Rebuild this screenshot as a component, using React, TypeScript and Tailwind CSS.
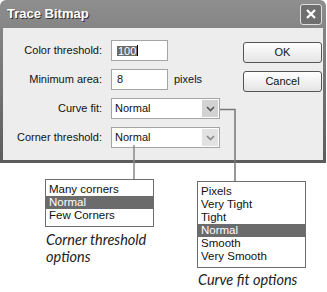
import React from 'react';

const dlgFont = { fontFamily: '"Liberation Sans", Arial, sans-serif' };
const capFont = { fontFamily: 'Lato, "Open Sans", sans-serif' };

const Chevron = ({ light }: { light?: boolean }) => (
    <svg width="9" height="6" viewBox="0 0 9 6">
        <path d="M1 1 L4.5 4.5 L8 1" fill="none" stroke={light ? '#8a8a8a' : '#555'} strokeWidth="1.6" />
    </svg>
);

const Select = ({ value, light }: { value: string; light?: boolean }) => (
    <div className="flex items-center h-[21px] w-[109px] bg-white border border-[#a4a4a4] pl-[3px] pr-[1px]">
        <span className="flex-1 text-[11px] text-[#111]">{value}</span>
        <div className={`flex items-center justify-center w-[16px] h-[17px] ${light ? 'bg-[#e2e2e2]' : 'bg-[#d2d2d2]'}`}>
            <Chevron light={light} />
        </div>
    </div>
);

const OptionList = ({ items, selected }: { items: string[]; selected: string }) => (
    <div className="w-[109px] bg-white border border-[#6e6e6e] pt-[3px] pb-[4px]" style={dlgFont}>
        {items.map((item) => (
            <div
                key={item}
                className={`h-[13px] leading-[13px] pl-[3px] text-[11.5px] ${item === selected ? 'bg-[#6b6b6b] text-white' : 'text-[#111]'}`}
            >
                {item}
            </div>
        ))}
    </div>
);

export default function App() {
    return (
        <div className="relative w-[327px] h-[292px] bg-white overflow-hidden">
            {/* dialog */}
            <div className="w-[326px] h-[163px] flex flex-col rounded-t-[6px] overflow-hidden bg-gradient-to-b from-[#8e8e8e] to-[#5c5c5c] px-[3px] pb-[3px]" style={dlgFont}>
                <div className="h-[28px] flex items-center justify-between pl-[4px] pr-[1px]">
                    <span className="text-[13px] font-bold text-white [text-shadow:1px_1px_0_#333]">Trace Bitmap</span>
                    <div className="w-[22px] h-[21px] rounded-[3px] border border-[#e0e0e0] bg-[#6f6f6f] flex items-center justify-center">
                        <svg width="12" height="12" viewBox="0 0 12 12">
                            <path d="M2 2 L10 10 M10 2 L2 10" stroke="white" strokeWidth="2.2" />
                        </svg>
                    </div>
                </div>
                <div className="flex-1 bg-[#ededed] flex">
                    <div className="grid grid-cols-[99px_auto] gap-x-[9px] gap-y-[8px] pt-[12px] content-start">
                        <span className="h-[21px] flex items-center justify-end text-[11px] text-[#111]">Color threshold:</span>
                        <div className="h-[21px] w-[57px] bg-white border border-[#a4a4a4] flex items-center pl-[5px]">
                            <span className="text-[11px] leading-[10px] bg-[#6b6b6b] text-white px-px">100</span>
                            <span className="w-px h-[11px] bg-black" />
                        </div>

                        <span className="h-[21px] flex items-center justify-end text-[11px] text-[#111]">Minimum area:</span>
                        <div className="flex items-center gap-[6px]">
                            <div className="h-[21px] w-[57px] bg-white border border-[#a4a4a4] flex items-center pl-[5px]">
                                <span className="text-[11px] text-[#111]">8</span>
                            </div>
                            <span className="text-[11px] text-[#111]">pixels</span>
                        </div>

                        <span className="h-[21px] flex items-center justify-end text-[11px] text-[#111]">Curve fit:</span>
                        <Select value="Normal" />

                        <span className="h-[21px] flex items-center justify-end text-[11px] text-[#111]">Corner threshold:</span>
                        <Select value="Normal" light />
                    </div>
                    <div className="ml-auto mr-[1px] flex flex-col gap-[8px] pt-[14px]">
                        <button className="w-[79px] h-[21px] rounded-[3px] border border-[#555] bg-gradient-to-b from-white to-[#e4e4e4] text-[11px] text-[#111]">OK</button>
                        <button className="w-[79px] h-[21px] rounded-[3px] border border-[#555] bg-gradient-to-b from-white to-[#e4e4e4] text-[11px] text-[#111]">Cancel</button>
                    </div>
                </div>
            </div>

            {/* callouts */}
            <div className="flex items-start">
                <div className="ml-[45px] mt-[16px] flex flex-col">
                    <OptionList items={['Many corners', 'Normal', 'Few Corners']} selected="Normal" />
                    <div className="mt-[4px] pl-[1px] text-[14.5px] leading-[17px] italic text-[#222]" style={capFont}>
                        Corner threshold<br />options
                    </div>
                </div>
                <div className="ml-[43px] mt-[18px] flex flex-col">
                    <OptionList items={['Pixels', 'Very Tight', 'Tight', 'Normal', 'Smooth', 'Very Smooth']} selected="Normal" />
                    <div className="mt-[3px] pl-[1px] text-[14.5px] leading-[17px] italic text-[#222]" style={capFont}>
                        Curve fit options
                    </div>
                </div>
            </div>

            {/* leader lines */}
            <svg className="absolute inset-0 pointer-events-none" width="327" height="292">
                <path d="M220 109.5 H235 V181" fill="none" stroke="#777" strokeWidth="1.5" />
                <path d="M134 145 V179" fill="none" stroke="#888" strokeWidth="1.5" />
            </svg>
        </div>
    );
}
